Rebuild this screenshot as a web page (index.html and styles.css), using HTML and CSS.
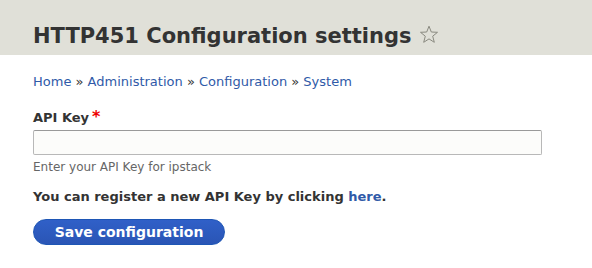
FILE: index.html
```html
<!DOCTYPE html>
<html lang="en">
<head>
  <meta charset="UTF-8" />
  <title>HTTP451 Configuration settings</title>
  <link rel="stylesheet" href="styles.css">
</head>
<body>
  <div class="page-header">
    <h1 class="page-title">HTTP451 Configuration settings
      <svg class="shortcut" width="20" height="19" viewBox="0 0 20 19">
        <path d="M10 1.2 L12.3 7 L18.5 7.3 L13.7 11.2 L15.3 17.3 L10 13.9 L4.7 17.3 L6.3 11.2 L1.5 7.3 L7.7 7 Z" fill="none" stroke="#8a8a80" stroke-width="1"/>
      </svg>
    </h1>
  </div>

  <div class="content">
    <nav class="breadcrumb">
      <a href="#">Home</a> » <a href="#">Administration</a> » <a href="#">Configuration</a> » <a href="#">System</a>
    </nav>

    <form class="config-form">
      <div class="form-item">
        <label for="api-key">API Key<span class="required">*</span></label>
        <input type="text" id="api-key" />
        <div class="description">Enter your API Key for ipstack</div>
      </div>

      <p class="register">You can register a new API Key by clicking <a href="#">here</a>.</p>

      <button type="button" class="button-primary">Save configuration</button>
    </form>
  </div>
</body>
</html>
```

FILE: styles.css
```css
body {
  margin: 0;
  font-family: "DejaVu Sans", sans-serif;
  font-size: 13px;
  color: #333;
  background: #fff;
}

a {
  color: #2f5aa8;
  text-decoration: none;
}

.page-header {
  background-color: #e0e0d8;
  height: 55px;
  padding: 0 33px;
  box-sizing: border-box;
}

.page-title {
  margin: 0;
  padding-top: 23px;
  font-size: 21px;
  line-height: 26px;
  font-weight: bold;
  color: #333;
}

.shortcut {
  vertical-align: -1px;
}

.content {
  padding: 0 33px;
}

.breadcrumb {
  margin-top: 18px;
  font-size: 13px;
  line-height: 18px;
}

.config-form {
  margin-top: 17px;
}

.form-item label {
  display: block;
  font-weight: bold;
  font-size: 13px;
  line-height: 18px;
}

.required {
  color: #e00;
  font-size: 16px;
  margin-left: 3px;
}

.form-item input {
  display: block;
  box-sizing: border-box;
  width: 509px;
  height: 25px;
  margin-top: 3px;
  border: 1px solid #b8b8b8;
  border-top-color: #999;
  border-radius: 2px;
  background: #fcfcfa;
}

.description {
  margin-top: 4px;
  font-size: 12px;
  line-height: 16px;
  color: #666;
}

.register {
  margin: 13px 0 0;
  font-weight: bold;
  line-height: 18px;
}

.button-primary {
  margin-top: 13px;
  width: 192px;
  height: 26px;
  border: 1px solid #1e56b5;
  border-radius: 20px;
  background: linear-gradient(#3060c8, #2a55b5);
  color: #fff;
  font-family: "DejaVu Sans", sans-serif;
  font-size: 14px;
  font-weight: bold;
  cursor: pointer;
}
```
